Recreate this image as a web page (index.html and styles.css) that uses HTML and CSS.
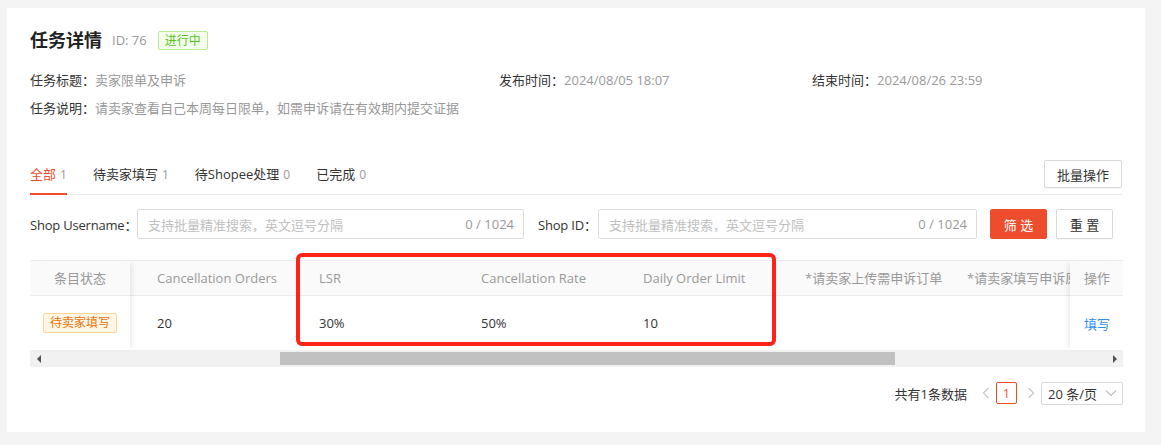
FILE: index.html
```html
<!DOCTYPE html>
<html lang="zh-CN">
<head>
<meta charset="utf-8">
<title>任务详情</title>
<link rel="stylesheet" href="styles.css">
</head>
<body>
<div class="page">
  <div class="card">
    <div class="title-row">
      <h1 class="title">任务详情</h1>
      <span class="task-id">ID: 76</span>
      <span class="tag-green">进行中</span>
    </div>
    <div class="info-grid">
      <div class="info"><span class="info-label">任务标题：</span><span class="info-value">卖家限单及申诉</span></div>
      <div class="info"><span class="info-label">发布时间：</span><span class="info-value">2024/08/05 18:07</span></div>
      <div class="info"><span class="info-label">结束时间：</span><span class="info-value">2024/08/26 23:59</span></div>
      <div class="info info-wide"><span class="info-label">任务说明：</span><span class="info-value">请卖家查看自己本周每日限单，如需申诉请在有效期内提交证据</span></div>
    </div>

    <div class="tabbar">
      <div class="tabs">
        <div class="tab active">全部<span class="count">1</span></div>
        <div class="tab">待卖家填写<span class="count">1</span></div>
        <div class="tab">待Shopee处理<span class="count">0</span></div>
        <div class="tab">已完成<span class="count">0</span></div>
      </div>
      <button class="btn btn-default btn-batch">批量操作</button>
    </div>

    <div class="filters">
      <label class="f-label f-label-user">Shop Username：</label>
      <div class="input input-user"><span class="ph">支持批量精准搜索，英文逗号分隔</span><span class="cnt">0 / 1024</span></div>
      <label class="f-label f-label-id">Shop ID：</label>
      <div class="input input-id"><span class="ph">支持批量精准搜索，英文逗号分隔</span><span class="cnt">0 / 1024</span></div>
      <button class="btn btn-primary">筛 选</button>
      <button class="btn btn-default btn-reset">重 置</button>
    </div>

    <div class="table">
      <div class="table-main">
        <div class="fixed-left">
          <div class="th th-center">条目状态</div>
          <div class="td td-center"><span class="tag-orange">待卖家填写</span></div>
        </div>
        <div class="scroll-view">
          <div class="scroll-inner">
            <div class="col"><div class="th">Cancellation Orders</div><div class="td">20</div></div>
            <div class="col"><div class="th">LSR</div><div class="td">30%</div></div>
            <div class="col"><div class="th">Cancellation Rate</div><div class="td">50%</div></div>
            <div class="col"><div class="th">Daily Order Limit</div><div class="td">10</div></div>
            <div class="col"><div class="th">*请卖家上传需申诉订单</div><div class="td"></div></div>
            <div class="col"><div class="th">*请卖家填写申诉原因</div><div class="td"></div></div>
          </div>
        </div>
        <div class="fixed-right">
          <div class="th">操作</div>
          <div class="td"><a class="link">填写</a></div>
        </div>
      </div>
      <div class="hscroll">
        <span class="arrow arrow-left"></span>
        <div class="track"><div class="thumb" style="margin-left:233px;width:615px"></div></div>
        <span class="arrow arrow-right"></span>
      </div>
    </div>

    <div class="pager">
      <span class="total">共有1条数据</span>
      <span class="pg-arrow">
        <svg width="8" height="12" viewBox="0 0 8 12"><path d="M6.5 1 L1.5 6 L6.5 11" fill="none" stroke="#c8c8c8" stroke-width="1.2"/></svg>
      </span>
      <span class="pg-item">1</span>
      <span class="pg-arrow">
        <svg width="8" height="12" viewBox="0 0 8 12"><path d="M1.5 1 L6.5 6 L1.5 11" fill="none" stroke="#c8c8c8" stroke-width="1.2"/></svg>
      </span>
      <div class="pg-size">20 条/页
        <svg class="chev" width="12" height="8" viewBox="0 0 12 8"><path d="M1 1.5 L6 6.5 L11 1.5" fill="none" stroke="#c0c0c0" stroke-width="1.2"/></svg>
      </div>
    </div>

    <div class="highlight"></div>
  </div>
</div>
</body>
</html>
```

FILE: styles.css
```css
* { box-sizing: border-box; }
html, body { margin: 0; padding: 0; }
body {
  background: #f4f4f4;
  font-family: "Open Sans", "Noto Sans CJK SC", sans-serif;
  font-size: 13px;
  color: #333;
}
.page {
  padding: 8px 16px 13px 7px;
}
.card {
  position: relative;
  background: #fff;
  width: 1138px;
  padding: 20px 23px 28px 23px;
}
.title-row {
  display: flex;
  align-items: center;
  height: 24px;
}
.title {
  margin: 0;
  font-size: 18px;
  font-weight: 700;
  line-height: 24px;
  color: #222;
}
.task-id {
  margin-left: 10px;
  color: #999;
  font-size: 13px;
}
.tag-green {
  margin-left: 11px;
  height: 19px;
  line-height: 17px;
  padding: 0 6px;
  font-size: 12px;
  color: #52c41a;
  background: #f6ffed;
  border: 1px solid #b7eb8f;
  border-radius: 2px;
}
.info-grid {
  margin-top: 18px;
  display: grid;
  grid-template-columns: 469px 313px 1fr;
  row-gap: 8px;
  line-height: 20px;
}
.info-wide { grid-column: 1 / 4; }
.info-label { color: #333; }
.info-value { color: #999; }

.tabbar {
  margin-top: 42px;
  display: flex;
  justify-content: space-between;
  align-items: flex-start;
  height: 35px;
  border-bottom: 1px solid #e8e8e8;
}
.tabs { display: flex; gap: 26px; }
.tab {
  height: 35px;
  padding-top: 4px;
  line-height: 20px;
  font-size: 13px;
  color: #333;
  white-space: nowrap;
}
.tab.active {
  color: #ee4d2d;
  border-bottom: 2px solid #ee4d2d;
}
.count {
  margin-left: 4px;
  font-size: 12px;
  color: #999;
}
.btn {
  font-family: inherit;
  font-size: 13px;
  border-radius: 2px;
  cursor: pointer;
  padding: 0;
  flex: none;
}
.btn-default {
  background: #fff;
  color: #333;
  border: 1px solid #d9d9d9;
  box-shadow: 0 1px 1px rgba(0,0,0,0.03);
}
.btn-batch {
  width: 78px;
  height: 28px;
}
.filters {
  margin-top: 14px;
  display: flex;
  align-items: center;
  height: 30px;
}
.f-label {
  flex: none;
  white-space: nowrap;
  letter-spacing: -0.2px;
}
.f-label-user { width: 107px; }
.f-label-id { width: 60px; margin-left: 14px; }
.input {
  flex: none;
  height: 30px;
  border: 1px solid #dcdcdc;
  border-radius: 2px;
  display: flex;
  align-items: center;
  justify-content: space-between;
  padding: 0 9px 0 10px;
  white-space: nowrap;
}
.input-user { width: 387px; }
.input-id { width: 379px; }
.ph { color: #c0c0c0; }
.cnt { color: #999; }
.btn-primary {
  margin-left: 13px;
  width: 57px;
  height: 30px;
  background: #ee4d2d;
  border: 1px solid #ee4d2d;
  color: #fff;
}
.btn-reset {
  margin-left: 9px;
  width: 57px;
  height: 30px;
}

.table {
  margin-top: 21px;
  width: 1093px;
}
.table-main {
  display: flex;
  border-top: 1px solid #eee;
}
.th {
  height: 35px;
  line-height: 34px;
  background: #fafafa;
  border-bottom: 1px solid #ececec;
  color: #999;
  white-space: nowrap;
  overflow: hidden;
}
.td {
  height: 54px;
  display: flex;
  align-items: center;
  color: #333;
  white-space: nowrap;
}
.th-center { text-align: center; }
.td-center { justify-content: center; }
.fixed-left {
  width: 100px;
  flex: none;
  position: relative;
  z-index: 2;
  background: #fff;
  box-shadow: 4px 0 6px -2px rgba(0,0,0,0.09);
}
.tag-orange {
  height: 20px;
  line-height: 18px;
  padding: 0 6px;
  font-size: 12px;
  color: #e8730c;
  background: #fff7e6;
  border: 1px solid #ffd591;
  border-radius: 2px;
}
.scroll-view {
  flex: 1;
  overflow: hidden;
  min-width: 0;
  background: linear-gradient(#fafafa 0 34px, #ececec 34px 35px, #fff 35px);
}
.scroll-inner {
  display: flex;
  padding-left: 11px;
}
.col {
  width: 162px;
  flex: none;
}
.col .th, .col .td { padding-left: 16px; }
.fixed-right {
  width: 53px;
  flex: none;
  position: relative;
  z-index: 2;
  background: #fff;
  box-shadow: -4px 0 6px -2px rgba(0,0,0,0.09);
}
.fixed-right .th, .fixed-right .td { padding-left: 14px; }
.link { color: #2f8ff0; }

.hscroll {
  display: flex;
  align-items: stretch;
  height: 17px;
  background: #f1f1f1;
}
.arrow {
  width: 17px;
  flex: none;
  display: flex;
  align-items: center;
  justify-content: center;
}
.arrow-left::before {
  content: "";
  border-top: 4px solid transparent;
  border-bottom: 4px solid transparent;
  border-right: 4px solid #505050;
}
.arrow-right::before {
  content: "";
  border-top: 4px solid transparent;
  border-bottom: 4px solid transparent;
  border-left: 4px solid #505050;
}
.track {
  flex: 1;
  padding: 2px 0;
}
.thumb {
  height: 13px;
  background: #c1c1c1;
}

.pager {
  margin-top: 15px;
  display: flex;
  justify-content: flex-end;
  align-items: center;
  height: 22px;
  width: 1093px;
}
.total { margin-right: 13px; color: #333; white-space: nowrap; }
.pg-arrow {
  display: flex;
  align-items: center;
  justify-content: center;
  width: 12px;
}
.pg-item {
  margin: 0 8px 0 4px;
  width: 21px;
  height: 22px;
  border: 1px solid #ee4d2d;
  border-radius: 2px;
  color: #ee4d2d;
  font-size: 12px;
  display: flex;
  align-items: center;
  justify-content: center;
}
.pg-size {
  margin-left: 4px;
  width: 82px;
  height: 23px;
  border: 1px solid #d9d9d9;
  border-radius: 2px;
  display: flex;
  align-items: center;
  padding-left: 6px;
  color: #333;
  gap: 6px;
  white-space: nowrap;
}
.chev { margin-left: 2px; }

.highlight {
  position: absolute;
  left: 289px;
  top: 245px;
  width: 480px;
  height: 93px;
  border: 4px solid #ff2318;
  border-radius: 6px;
  pointer-events: none;
  z-index: 5;
}
```
